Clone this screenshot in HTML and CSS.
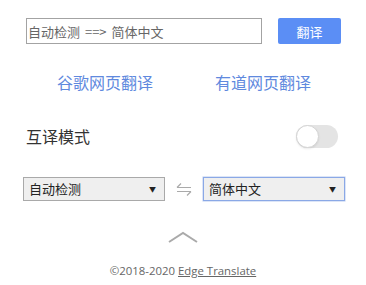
FILE: index.html
```html
<!DOCTYPE html>
<html lang="zh-CN">
<head>
<meta charset="utf-8">
<title>Edge Translate</title>
<link rel="stylesheet" href="styles.css">
</head>
<body>
<div class="popup">
  <div class="input-row">
    <input class="query" type="text" placeholder="自动检测 ==> 简体中文">
    <button class="translate-btn">翻译</button>
  </div>
  <div class="links">
    <a class="page-link" href="#">谷歌网页翻译</a>
    <a class="page-link" href="#">有道网页翻译</a>
  </div>
  <div class="mutual">
    <span class="mutual-label">互译模式</span>
    <span class="toggle"><span class="knob"></span></span>
  </div>
  <div class="lang-row">
    <div class="select">自动检测<span class="arrow">▼</span></div>
    <svg class="swap" width="18" height="14" viewBox="0 0 18 14">
      <path d="M2 5.5H16M2 5.5L6 1.5M16 9.5H2M16 9.5L12 13.5" fill="none" stroke="#aaa" stroke-width="1.2"/>
    </svg>
    <div class="select target">简体中文<span class="arrow">▼</span></div>
  </div>
  <div class="collapse">
    <svg width="30" height="12" viewBox="0 0 30 12">
      <path d="M1 11L15 2L29 11" fill="none" stroke="#aaa" stroke-width="2"/>
    </svg>
  </div>
  <div class="footer">©2018-2020 <a class="footer-link" href="#">Edge Translate</a></div>
</div>
</body>
</html>
```
FILE: styles.css
```css
* { box-sizing: border-box; }
body {
  margin: 0;
  background: #fff;
  font-family: "Open Sans", "Noto Sans CJK SC", sans-serif;
}
.popup {
  width: 366px;
  height: 285px;
  padding: 18px 0 0 0;
}
.input-row {
  display: flex;
  align-items: center;
  padding-left: 26px;
}
.query {
  width: 236px;
  height: 26px;
  border: 1px solid #a3a3a3;
  padding: 0 1px;
  font-family: "Noto Sans CJK SC", sans-serif;
  font-size: 13px;
  word-spacing: 2px;
  color: #555;
  outline: none;
}
.query::placeholder { color: #666; }
.translate-btn {
  margin-left: 16px;
  width: 63px;
  height: 26px;
  border: none;
  border-radius: 2px;
  background: #5b8ef5;
  color: #fff;
  font-family: "Noto Sans CJK SC", sans-serif;
  font-size: 13px;
  padding: 0;
}
.links {
  display: flex;
  margin-top: 27px;
  padding-left: 57px;
  gap: 62px;
}
.page-link {
  font-family: "Noto Sans CJK SC", sans-serif;
  font-size: 16px;
  line-height: 22px;
  color: #6089de;
  text-decoration: none;
}
.mutual {
  display: flex;
  align-items: center;
  justify-content: space-between;
  margin-top: 31px;
  padding: 0 28px 0 26px;
}
.mutual-label {
  font-family: "Noto Sans CJK SC", sans-serif;
  font-size: 16px;
  color: #333;
}
.toggle {
  position: relative;
  width: 42px;
  height: 23px;
  border-radius: 12px;
  background: #e4e4e4;
}
.knob {
  position: absolute;
  left: 0;
  top: 0;
  width: 23px;
  height: 23px;
  border-radius: 50%;
  background: #fff;
  border: 1px solid #d4d4d4;
  box-shadow: 0 1px 2px rgba(0,0,0,0.08);
}
.lang-row {
  display: flex;
  align-items: center;
  margin-top: 29px;
  padding-left: 23px;
}
.select {
  position: relative;
  width: 142px;
  height: 24px;
  background: #efefef;
  border: 1px solid #a9a9a9;
  font-family: "Noto Sans CJK SC", sans-serif;
  font-size: 13px;
  line-height: 22px;
  color: #222;
  padding-left: 5px;
}
.select.target {
  border-color: #8aa8e6;
  box-shadow: 0 0 0 0.5px #b9cbf0;
}
.arrow {
  position: absolute;
  right: 8px;
  top: 0;
  font-size: 7px;
  color: #222;
}
.swap {
  margin: 0 10px 0 10px;
}
.collapse {
  display: flex;
  justify-content: center;
  margin-top: 30px;
}
.footer {
  margin-top: 20px;
  text-align: center;
  font-size: 11.4px;
  color: #666;
}
.footer-link {
  color: #666;
  text-decoration: underline;
}
```
